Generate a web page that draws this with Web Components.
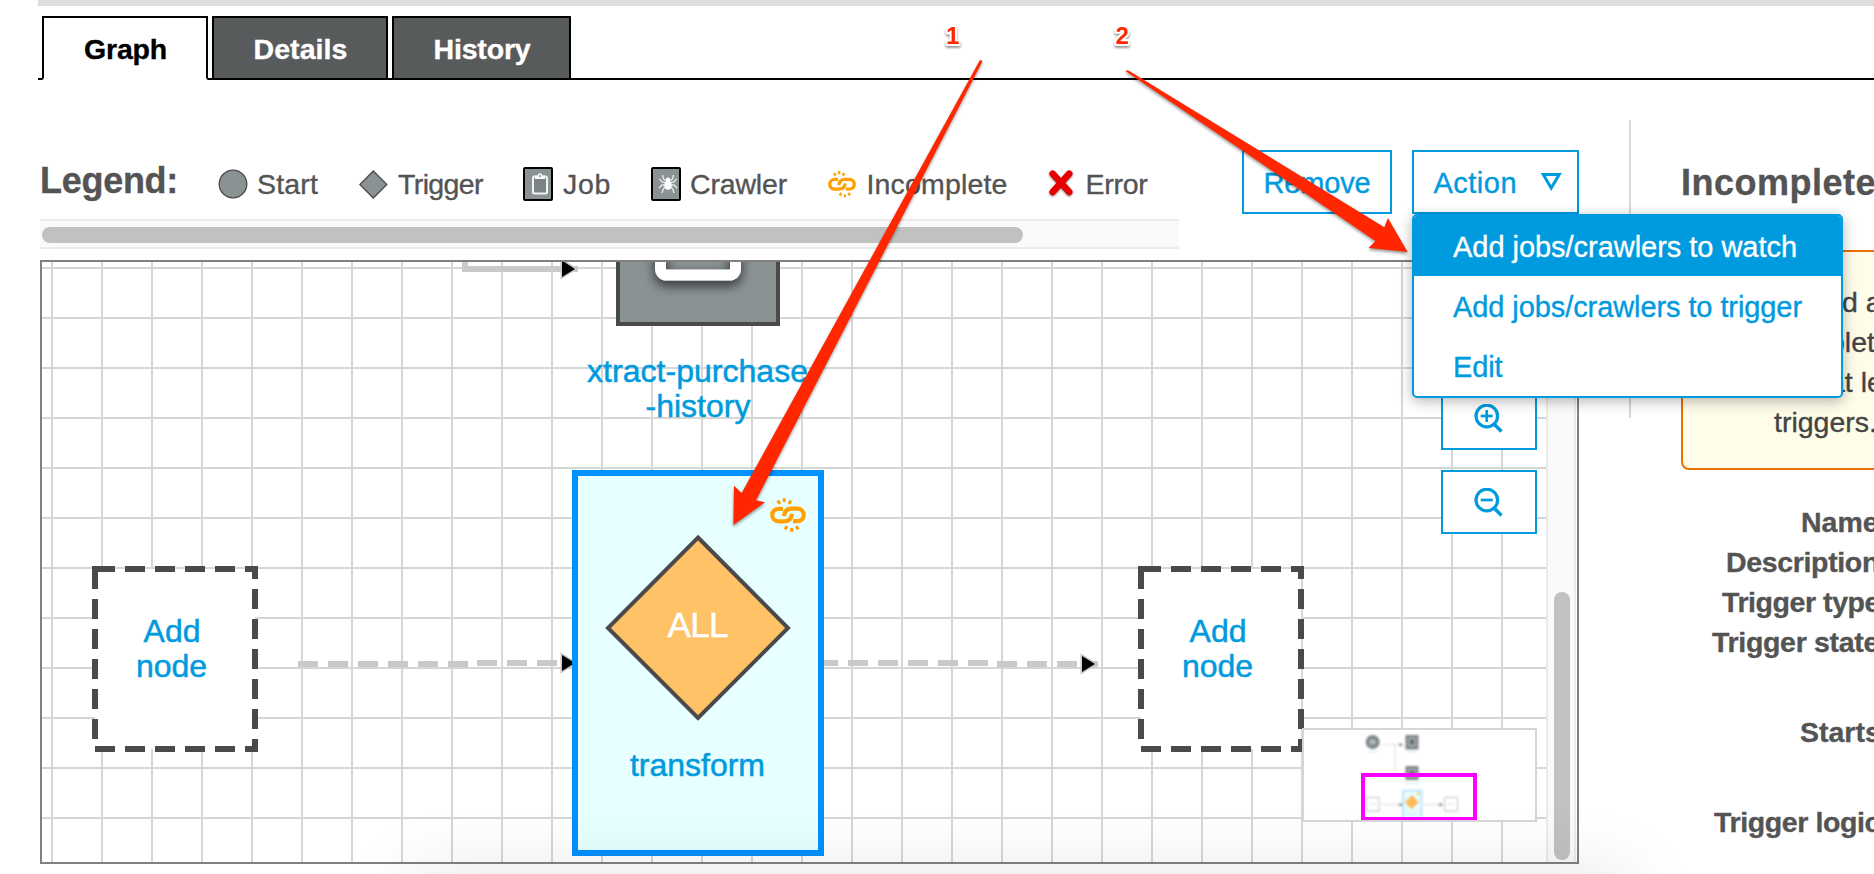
<!DOCTYPE html>
<html lang="en">
<head>
<meta charset="utf-8">
<title>Workflow graph</title>
<style>
html,body{margin:0;height:874px;overflow:hidden;background:#fff;font-family:"Liberation Sans",Arial,Helvetica,sans-serif;font-size:28.500px;color:#545454;-webkit-text-stroke:.35px currentColor}
</style>
</head>
<body>
<workflow-page></workflow-page>
<script>
const define = (name, html, after) => customElements.define(name, class extends HTMLElement {
  connectedCallback() {
    if (this.shadowRoot) return;
    const t = document.createElement('template');
    t.innerHTML = html;
    this.attachShadow({mode: 'open'}).append(document.importNode(t.content, true));
    if (after) after(this);
  }
});

const LINK = `<path d="M13 10.800H9C4.800 10.800 2.200 13.400 2.200 17S5 23.300 9 23.300H14C18.600 23.300 21.600 20.600 22 15.800"/><path d="M14.300 .2V4M7.600 2.600L10 5.800M21 2.600L18.800 5.800" stroke-width="3"/>`;
const CHAIN = `<g fill="none" stroke="#ff9f00" stroke-width="4.200">${LINK}<g transform="rotate(180 18 17)">${LINK}</g></g>`;
const ICONS = {
  start: `<svg width="30" height="30"><circle cx="15" cy="15" r="13.8" fill="#8a9294" stroke="#4a4a4a" stroke-width="1.3"/></svg>`,
  trigger: `<svg width="29" height="29"><path d="M14.3 1L27.8 14.5L14.3 28L.8 14.5Z" fill="#8a9294" stroke="#4a4a4a" stroke-width="1.3"/></svg>`,
  job: `<svg width="30" height="34"><rect x="1" y="1" width="28" height="32" rx="1" fill="#8a9294" stroke="#000" stroke-width="2"/><rect x="10" y="9.5" width="14" height="17" rx="1.5" fill="#7b8385" stroke="#f2f4f4" stroke-width="2"/><path d="M12 12V8.5H14.8A2.3 2.3 0 0 1 19.4 8.5H22V12Z" fill="#f6f8f8"/><circle cx="17" cy="9" r="1" fill="#8a9294"/></svg>`,
  crawler: `<svg width="30" height="34"><rect x="1" y="1" width="28" height="32" rx="1" fill="#8a9294" stroke="#000" stroke-width="2"/><g fill="none" stroke="#e8ebeb" stroke-width="1.3"><path d="M17 15L12.5 12L11.5 8M17 15L21.5 12L22.5 8M16 16L11 15L8.5 12M18 16L23 15L25.5 12M16 18L11 18L8 21M18 18L23 18L26 21M16 19L12.5 21.500L11 26M18 19L21.500 21.500L23 26"/></g><ellipse cx="17" cy="18.300" rx="3.600" ry="4.500" fill="#fff"/><circle cx="17" cy="12.600" r="2.200" fill="#fff"/></svg>`,
  incomplete: `<svg width="28" height="27" viewBox="0 0 36 34.500">${CHAIN}</svg>`,
  error: `<svg width="26" height="27" style="overflow:visible;filter:drop-shadow(0 1px 1px #0007)"><path d="M3.700 2.700L20.200 21M20.200 2.700L3.700 21" stroke="#e60000" stroke-width="6.600" stroke-linecap="round"/></svg>`
};

define('nav-tab', `<style>
:host{display:flex;box-sizing:border-box;height:64px;border:2px solid #000;background:#585b5c;color:#fff;font-weight:700;justify-content:center;align-items:center;padding:3px 0 0 1px}
:host([active]){background:#fff;color:#000;border-bottom-color:#fff;border-bottom-left-radius:2px;border-bottom-right-radius:2px}
</style><slot></slot>`);

define('tab-bar', `<style>
:host{display:flex;height:64px;margin-left:38px;padding-left:4px;gap:4px;background:linear-gradient(#000,#000) 0 100%/100% 2px no-repeat}
nav-tab:nth-child(2){width:166px}nav-tab:nth-child(3){width:176px}nav-tab:nth-child(4){width:179px}
</style>
<nav-tab active><fit-text w="83">Graph</fit-text></nav-tab>
<nav-tab><fit-text w="94">Details</fit-text></nav-tab>
<nav-tab><fit-text w="97">History</fit-text></nav-tab>`);

define('legend-item', `<style>
:host{display:flex;align-items:center;height:68px}
i{flex:none;display:flex;width:var(--icon,39px)}
::slotted(*){position:relative;top:.5px}
</style><i></i><slot></slot>`, el => { el.shadowRoot.querySelector('i').innerHTML = ICONS[el.getAttribute('icon')]; });

define('graph-legend', `<style>
:host{display:block;width:1139px}
.row{display:grid;grid-template-columns:178px 141px 164px 128px 177px 221px auto;height:69px}
b{font-size:36px;line-height:62px}
.track{box-sizing:border-box;height:30px;border:solid #ebebeb;border-width:2px 0;background:#fafafa;padding:6px 2px}
.thumb{width:981px;height:16px;border-radius:8px;background:#c1c1c1}
</style>
<div class="row"><b><fit-text w="138">Legend:</fit-text></b>
<legend-item icon="start"><fit-text w="61">Start</fit-text></legend-item>
<legend-item icon="trigger"><fit-text w="85">Trigger</fit-text></legend-item>
<legend-item icon="job" style="--icon:40px"><fit-text w="48">Job</fit-text></legend-item>
<legend-item icon="crawler"><fit-text w="97">Crawler</fit-text></legend-item>
<legend-item icon="incomplete" style="--icon:38.500px"><fit-text w="141">Incomplete</fit-text></legend-item>
<legend-item icon="error" style="--icon:36.500px"><fit-text w="62">Error</fit-text></legend-item></div>
<div class="track"><div class="thumb"></div></div>`);

define('outline-button', `<style>
:host{box-sizing:border-box;display:flex;align-items:center;height:64px;border:2px solid #009ade;background:#fff;color:#009ade;padding:3px 20px 0 19.500px;font-size:29px}
</style><slot></slot>`);

define('menu-item', `<style>
:host{display:block;height:60px;line-height:63px;padding-left:39px;font-size:29px}
:host([selected]){background:#009ade;color:#fff}
</style><slot></slot>`);

define('action-menu', `<style>
:host{display:block;box-sizing:border-box;width:431px;height:184px;border:2px solid #009ade;border-radius:5px;background:#fff;color:#009ade;box-shadow:0 3px 14px rgba(0,0,0,.3);overflow:hidden}
</style>
<menu-item selected><fit-text w="344">Add jobs/crawlers to watch</fit-text></menu-item>
<menu-item><fit-text w="349">Add jobs/crawlers to trigger</fit-text></menu-item>
<menu-item><fit-text w="49.500">Edit</fit-text></menu-item>`);

define('graph-toolbar', `<style>
:host{display:flex;height:110px}
.actions{display:flex;align-items:flex-start;gap:20px;margin-left:63px;position:relative}
outline-button:nth-child(1){width:150px}outline-button:nth-child(2){width:167px}
action-menu{position:absolute;left:170px;top:64px;z-index:5}
svg{margin-left:22.500px;margin-bottom:5px}
</style>
<graph-legend></graph-legend>
<div class="actions"><outline-button><fit-text w="107">Remove</fit-text></outline-button>
<outline-button><fit-text w="83.500">Action</fit-text><svg width="22" height="19" style="overflow:visible"><path d="M3.300 2.500H19.200L11.200 16Z" fill="none" stroke="#009ade" stroke-width="3"/></svg></outline-button>
<action-menu></action-menu></div>`);

define('zoom-button', `<style>
:host{box-sizing:border-box;display:flex;width:96px;height:64px;border:2px solid #009ade;background:#fff;padding:16px 0 0 31px}
path.v{display:none}:host([plus]) path.v{display:inline}
</style>
<svg width="30" height="30" fill="none" stroke="#009ade" stroke-width="3.200"><circle cx="12.800" cy="12" r="10.800"/><path d="M20 20L27.500 27.500" stroke-width="3.600"/><path d="M6.700 12H18.700" stroke-width="2.700"/><path class="v" d="M12.700 6V18" stroke-width="2.700"/></svg>`);

define('mini-map', `<style>
:host{display:block;box-sizing:border-box;width:235px;height:94px;border:2px solid #d6d6d6;background:#fff;overflow:hidden}
svg{display:block}
</style>
<svg width="231" height="90" viewBox="1304 730 231 90">
<g style="filter:blur(.9px)">
<circle cx="1372.700" cy="742" r="7" fill="#7e8789"/><rect x="1369.500" y="739.500" width="6" height="5" fill="#b3babb"/>
<path d="M1382 744.500H1400M1395 744.500V772M1382 804.500H1400M1424 804.500H1441" stroke="#ddd" fill="none"/>
<path d="M1399.500 743L1403 744.700L1399.500 746.500ZM1399.500 803L1403 804.800L1399.500 806.500ZM1439.500 803L1443 804.800L1439.500 806.500Z" fill="#777"/>
<rect x="1405.500" y="735" width="13" height="14.500" fill="#7e8789"/><rect x="1409" y="738.500" width="6" height="7" fill="#697072" stroke="#ccd1d2"/>
<rect x="1405.500" y="766" width="13" height="14" fill="#7e8789"/><rect x="1409" y="769.500" width="6" height="7" fill="#697072" stroke="#ccd1d2"/>
<path d="M1404 783.500H1420M1368 752H1378M1407 752H1417" stroke="#e2f4fc" stroke-width="2"/>
<rect x="1403" y="790.500" width="18.500" height="32" fill="#e6fefe" stroke="#aedcff" stroke-width="1.500"/>
<path d="M1411.800 795L1418.800 802L1411.800 809L1404.800 802.500Z" fill="#ffb95a"/><circle cx="1418.500" cy="794" r="1.500" fill="#f9c97a"/>
<path d="M1406 813.500H1417M1370 804H1376M1448 804H1454" stroke="#d5effa" stroke-width="1.500"/>
<path d="M1366.500 797.500H1379V811H1366.500ZM1444.500 797.500H1457.500V811H1444.500Z" fill="none" stroke="#c4c4c4"/></g>
<rect x="1363" y="775" width="112" height="44" fill="none" stroke="#ff00ff" stroke-width="4"/>
</svg>`);

define('graph-canvas', `<style>
:host{display:flex;box-sizing:border-box;width:1539px;height:604px;border:2px solid #808080;position:relative;overflow:hidden}
svg{display:block;flex:none;font-size:32px}
.track{box-sizing:border-box;flex:1;border:solid #ebebeb;border-width:0 2px;background:#fafafa;margin-right:1px;padding:330px 4px 0 6px}
.thumb{width:16px;height:268px;border-radius:8px;background:#c1c1c1}
.zoom{position:absolute;left:1399px;top:124px;display:flex;flex-direction:column;gap:20px}
mini-map{position:absolute;left:1260px;top:466px}
</style>
<svg width="1504" height="600" viewBox="42 262 1504 600">
<defs><pattern id="grid" x="51" y="267" width="50" height="50" patternUnits="userSpaceOnUse"><path d="M0 1H50M1 0V50" stroke="#d5d6d6" stroke-width="2"/></pattern>
<filter id="sh" x="-30%" y="-30%" width="160%" height="170%"><feDropShadow dx="0" dy="5" stdDeviation="6" flood-color="#000" flood-opacity=".7"/></filter></defs>
<rect x="42" y="262" width="1504" height="600" fill="url(#grid)"/>
<g stroke="#cac8c8" stroke-width="6" fill="none"><path d="M465 255V269H578"/>
<path d="M298 664H477M997 664H1098" stroke-dasharray="20 10"/><path d="M477 663H572" stroke-dasharray="20 10"/><path d="M818 663H990" stroke-dasharray="20 10"/></g>
<g stroke="#cac8c8" stroke-width="3" paint-order="stroke" fill="#000"><path d="M562 260.500V277L575 269Z"/><path d="M562 655V671L575 663Z"/><path d="M1082 656V672L1095 664Z"/></g>
<rect x="618" y="200" width="160" height="124" fill="#8a9294" stroke="#4a4a4a" stroke-width="4"/>
<g filter="url(#sh)"><rect x="660.500" y="190" width="75" height="85" rx="6" fill="none" stroke="#fff" stroke-width="11"/></g>
<g fill="#fff" stroke="#4a4a4a" stroke-width="6" stroke-dasharray="20 10"><rect x="95" y="569" width="160" height="180"/><rect x="1141" y="569" width="160" height="180"/></g>
<rect x="575" y="473" width="246" height="380" fill="#e8ffff" stroke="#0090ff" stroke-width="6"/>
<path d="M698 537.500L788 628L698 718L608 628Z" fill="#ffc266" stroke="#4a4a4a" stroke-width="4"/>
<g transform="translate(770 498)">${CHAIN}</g>
<g fill="#009ade" text-anchor="middle" style="-webkit-text-stroke:0" stroke="#009ade" stroke-width=".5">
<text x="697.500" y="382" textLength="221">xtract-purchase</text><text x="698" y="417" textLength="105">-history</text>
<text x="698" y="636.500" textLength="61" fill="#fff" stroke="#fff" font-size="35">ALL</text><text x="697.500" y="776" textLength="135">transform</text>
<text x="172" y="642" textLength="57">Add</text><text x="171.500" y="677" textLength="71">node</text>
<text x="1218" y="642" textLength="57">Add</text><text x="1217.500" y="677" textLength="71">node</text></g>
</svg>
<div class="track"><div class="thumb"></div></div>
<div class="zoom"><zoom-button plus></zoom-button><zoom-button></zoom-button></div>
<mini-map></mini-map>`);

define('trigger-details', `<style>
:host{display:flex;flex:1;min-width:0;overflow:hidden}
.rule{flex:none;width:2px;height:298px;margin-top:40px;background:#d5d8d8}
.body{flex:none;width:199px;margin-left:50px;padding-top:70px}
h2{margin:0;font-size:36px;line-height:66px;height:100px}
.alert{box-sizing:border-box;width:260px;height:220px;border:2px solid #eb7100;border-radius:8px;background:#fffce9;padding-top:30px;line-height:40px;color:#444;white-space:nowrap}
.alert div{padding-left:var(--x)}
.props{margin-top:32px;line-height:40px;font-weight:700}
.props div{padding-left:var(--x);height:40px;white-space:nowrap}
</style>
<div class="rule"></div>
<div class="body"><h2><fit-text w="195">Incomplete</fit-text></h2>
<div class="alert"><div style="--x:159px">d a</div><div style="--x:146px">plet</div><div style="--x:146px">at le</div><div style="--x:91px"><fit-text w="103">triggers.</fit-text></div></div>
<div class="props"><div style="--x:120px">Name</div><div style="--x:45px"><fit-text w="153">Description</fit-text></div><div style="--x:41px"><fit-text w="158">Trigger type</fit-text></div><div style="--x:31px"><fit-text w="167">Trigger state</fit-text></div><div style="--x:119px;margin-top:50px">Starts</div><div style="--x:33px;margin-top:50px"><fit-text w="166">Trigger logic</fit-text></div></div></div>`);

define('callout-arrows', `<style>
:host{position:absolute;inset:0;z-index:10;pointer-events:none}
svg{display:block;-webkit-text-stroke:0}
</style>
<svg width="1874" height="874"><g fill="#ff2600" style="filter:drop-shadow(0 2px 1.500px rgba(0,0,0,.4))">
<path d="M979.700 60.500Q981.500 59 982.300 61.500L756 500.300L765 502.300L733.300 525L734 485.700L741.700 493Z"/>
<path d="M1126 71.500Q1126 69.500 1128.500 70.500L1384.400 227.300L1387.900 218L1407.700 252L1368.500 248L1375.400 241Z"/></g>
<g font-size="24" font-weight="700" fill="#ff2600" stroke="#fff" stroke-width="4" paint-order="stroke" stroke-linejoin="round" style="filter:drop-shadow(0 2px 1px rgba(0,0,0,.4))"><text x="946" y="44">1</text><text x="1115.500" y="44">2</text></g></svg>`);

define('workflow-page', `<style>
:host{display:block;position:relative;width:1874px;height:874px;overflow:hidden}
.top{height:6px;margin:0 0 10px 38px;background:#dedede}
main{display:flex}
.left{width:1539px;margin-left:40px;padding-top:70px;flex:none;position:relative;z-index:1}
trigger-details{margin-left:50px}
.shade{position:absolute;left:420px;top:884px;width:1200px;height:60px;box-shadow:0 0 80px 4px rgba(0,0,0,.13);z-index:4}
</style>
<div class="top"></div><tab-bar></tab-bar>
<main><div class="left"><graph-toolbar></graph-toolbar><graph-canvas></graph-canvas></div><trigger-details></trigger-details></main>
<div class="shade"></div><callout-arrows></callout-arrows>`);

/* A label whose tracking is adjusted so that its run is w pixels long. */
define('fit-text', `<style>:host{display:inline-block;white-space:nowrap}</style><slot></slot>`, el => {
  const n = el.textContent.length, w = el.getBoundingClientRect().width;
  el.style.letterSpacing = ((+el.getAttribute('w') - w) / n).toFixed(3) + 'px';
});
</script>
</body>
</html>
